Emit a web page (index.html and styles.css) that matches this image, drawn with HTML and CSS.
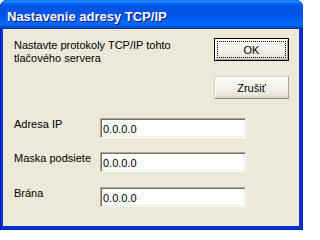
FILE: index.html
```html
<!DOCTYPE html>
<html lang="sk">
<head>
<meta charset="utf-8">
<title>Nastavenie adresy TCP/IP</title>
<link rel="stylesheet" href="styles.css">
</head>
<body>
<div class="window">
  <div class="titlebar"><span class="title">Nastavenie adresy TCP/IP</span></div>
  <div class="client">
    <div class="top-row">
      <p class="message">Nastavte protokoly TCP/IP tohto tlačového servera</p>
      <div class="buttons">
        <button class="btn btn-default" type="button">OK</button>
        <button class="btn" type="button">Zrušiť</button>
      </div>
    </div>
    <div class="fields">
      <label class="field">
        <span class="label">Adresa IP</span>
        <input class="textbox" type="text" value="0.0.0.0">
      </label>
      <label class="field">
        <span class="label">Maska podsiete</span>
        <input class="textbox" type="text" value="0.0.0.0">
      </label>
      <label class="field field-last">
        <span class="label">Brána</span>
        <input class="textbox" type="text" value="0.0.0.0">
      </label>
    </div>
  </div>
</div>
</body>
</html>
```
FILE: styles.css
```css
html, body {
  margin: 0;
  padding: 0;
  background: #ffffff;
}

body {
  font-family: "Liberation Sans", Arial, sans-serif;
  font-size: 11px;
  color: #000;
}

.window {
  width: 303px;
  height: 230px;
  box-sizing: border-box;
  display: flex;
  flex-direction: column;
  background: #0831d9;
  border-radius: 7px 7px 0 0;
  overflow: hidden;
  box-shadow: inset 1px 0 #0019a8, inset -1px 0 #001ea0, inset 0 -1px #001ea0;
}

.titlebar {
  height: 29px;
  box-sizing: border-box;
  padding: 4px 0 0 7px;
  display: flex;
  align-items: center;
  flex: none;
  background: linear-gradient(to bottom,
    #0058ee 0%, #3593ff 4%, #288eff 6%, #127dff 8%, #036ffc 10%,
    #0262ee 14%, #0057e5 20%, #0054e3 24%, #0055eb 56%, #005bf5 66%,
    #026afe 76%, #0062ef 86%, #0052d6 92%, #0040ab 96%, #003092 100%);
}

.title {
  color: #ffffff;
  font-weight: bold;
  font-size: 13px;
  line-height: 15px;
  text-shadow: 1px 1px #0a1883;
  white-space: nowrap;
}

.client {
  flex: 1;
  margin: 0 4px 4px 3px;
  background: #ece9d8;
  padding: 9px 10px 0 11px;
  box-sizing: border-box;
}

.top-row {
  display: flex;
  justify-content: space-between;
  align-items: flex-start;
}

.message {
  margin: 1px 0 0 0;
  max-width: 185px;
  line-height: 13px;
}

.buttons {
  display: flex;
  flex-direction: column;
  gap: 15px;
}

.btn {
  width: 75px;
  height: 23px;
  box-sizing: border-box;
  margin: 0;
  padding: 0;
  font-family: "Liberation Sans", Arial, sans-serif;
  font-size: 11px;
  color: #000;
  border: 1px solid;
  border-color: #d6d3c6 #aca899 #8f8c7e #d6d3c6;
  background: linear-gradient(to bottom, #fdfdfb 0%, #f4f3ee 45%, #ebe8dc 85%, #d8d4c4 100%);
  box-shadow: inset 1px 1px #ffffff;
}

.btn-default {
  border: 1px solid #000000;
  box-shadow: inset 1px 1px #ffffff, inset -1px -1px #aca899;
  outline: 1px dotted #000000;
  outline-offset: -4px;
}

.fields {
  margin-top: 19px;
  display: flex;
  flex-direction: column;
  gap: 14px;
}

.field {
  display: flex;
  align-items: flex-start;
}

.field-last {
  margin-top: 1px;
}

.label {
  width: 86px;
  flex: none;
  line-height: 13px;
  white-space: nowrap;
}

.textbox {
  width: 146px;
  height: 20px;
  box-sizing: border-box;
  margin: 0;
  padding: 1px 2px 0 2px;
  font-family: "Liberation Sans", Arial, sans-serif;
  font-size: 11px;
  color: #000;
  background: #ffffff;
  border: 1px solid;
  border-color: #aca899 #ffffff #ffffff #aca899;
  box-shadow: inset 1px 1px #716f64, inset -1px -1px #f1efe2;
  outline: none;
}
```
